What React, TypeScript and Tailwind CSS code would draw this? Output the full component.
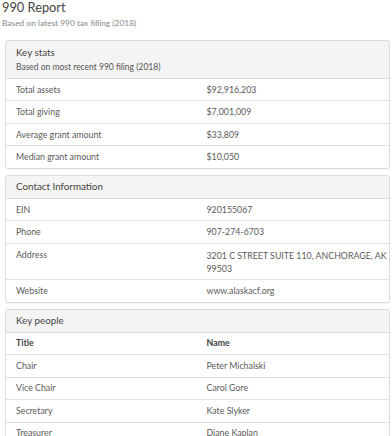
import React from "react";

type Row = { label: string; value: React.ReactNode; bold?: boolean };

function Panel({
  title,
  subtitle,
  rows,
  headerPad = "py-[4.5px]",
}: {
  title: string;
  subtitle?: string;
  rows: Row[];
  headerPad?: string;
}) {
  return (
    <div className="rounded-[3px] border border-[#dcdcdc] bg-white shadow-[0_1px_1px_rgba(0,0,0,0.05)] overflow-hidden">
      <div className={`bg-[#f4f4f4] px-[10px] ${headerPad} border-b border-[#dcdcdc]`}>
        <div className="text-[9.8px] leading-[13px] text-[#444]">{title}</div>
        {subtitle && (
          <div className="text-[8.5px] leading-[12px] text-[#555] mt-[2px]">{subtitle}</div>
        )}
      </div>
      {rows.map((r, i) => (
        <div
          key={i}
          className={`grid grid-cols-2 ${i > 0 ? "border-t border-[#e2e2e2]" : ""}`}
        >
          <div
            className={`pl-[10px] pr-[10px] py-[4.6px] text-[8.8px] leading-[12.3px] ${
              r.bold ? "font-bold text-[#444]" : "text-[#5a5a5a]"
            }`}
          >
            {r.label}
          </div>
          <div
            className={`pl-[9px] pr-[2px] py-[4.6px] text-[8.8px] leading-[12.3px] ${
              r.bold ? "font-bold text-[#444]" : "text-[#5a5a5a]"
            }`}
          >
            {r.value}
          </div>
        </div>
      ))}
    </div>
  );
}

export default function App() {
  return (
    <div className="w-[392px] h-[436px] overflow-hidden bg-white font-['Lato',sans-serif] pl-[5px] pr-[2px]">
      <div className="-ml-[3px]">
        <div className="text-[12.8px] leading-[14px] text-[#444]">990 Report</div>
        <div className="text-[8.4px] leading-[12px] text-[#888] mt-[3px]">
          Based on latest 990 tax filling (2018)
        </div>
      </div>
      <div className="mt-[11px] flex flex-col gap-[6px]">
        <Panel
          title="Key stats"
          subtitle="Based on most recent 990 filing (2018)"
          headerPad="py-[5px]"
          rows={[
            { label: "Total assets", value: "$92,916,203" },
            { label: "Total giving", value: "$7,001,009" },
            { label: "Average grant amount", value: "$33,809" },
            { label: "Median grant amount", value: "$10,050" },
          ]}
        />
        <Panel
          title="Contact Information"
          headerPad="py-[4.5px]"
          rows={[
            { label: "EIN", value: "920155067" },
            { label: "Phone", value: "907-274-6703" },
            {
              label: "Address",
              value: (
                <span className="block leading-[13px]">
                  3201 C STREET SUITE 110, ANCHORAGE, AK 99503
                </span>
              ),
            },
            { label: "Website", value: "www.alaskacf.org" },
          ]}
        />
        <Panel
          title="Key people"
          headerPad="py-[4.5px]"
          rows={[
            { label: "Title", value: "Name", bold: true },
            { label: "Chair", value: "Peter Michalski" },
            { label: "Vice Chair", value: "Carol Gore" },
            { label: "Secretary", value: "Kate Slyker" },
            { label: "Treasurer", value: "Diane Kaplan" },
          ]}
        />
      </div>
    </div>
  );
}
